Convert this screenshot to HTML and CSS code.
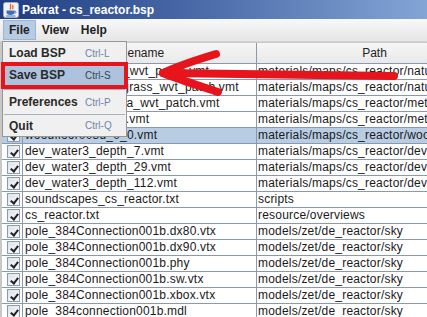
FILE: index.html
```html
<!DOCTYPE html>
<html>
<head>
<meta charset="utf-8">
<link rel="stylesheet" href="styles.css">
</head>
<body>
<div class="window">
  <div class="titlebar">
    <svg class="appicon" width="16" height="16" viewBox="0 0 16 16">
      <rect x="0.5" y="0.5" width="15" height="15" rx="2" fill="#eef2f8" stroke="#9aacc6"/>
      <path d="M8 2 C6 4 9 5 7 7.5 M10 3 C9 4.5 11 5 9.5 7" fill="none" stroke="#e06a1a" stroke-width="1.3"/>
      <path d="M3.5 8.5 H11.5 V10.5 C11.5 12 10 13 7.5 13 C5 13 3.5 12 3.5 10.5 Z" fill="#3e6fb5"/>
      <path d="M11.5 9.2 C13.5 9.2 13.5 11.2 11.3 11.4" fill="none" stroke="#3e6fb5" stroke-width="1"/>
      <path d="M3 14 H12.5" stroke="#3e6fb5" stroke-width="1"/>
    </svg>
    <span class="title">Pakrat - cs_reactor.bsp</span>
  </div>
  <div class="menubar">
    <span class="menu active">File</span>
    <span class="menu">View</span>
    <span class="menu">Help</span>
  </div>
  <div class="table">
    <div class="thead">
      <div class="th c0"></div>
      <div class="th c1">Filename</div>
      <div class="th c2">Path</div>
    </div>
    <div class="row"><div class="c0"><span class="chk"></span></div><div class="c1">blendrockgrass04_wvt_patch.vmt</div><div class="c2">materials/maps/cs_reactor/nature</div></div>
    <div class="row"><div class="c0"><span class="chk"></span></div><div class="c1">blendcobblestonegrass_wvt_patch.vmt</div><div class="c2">materials/maps/cs_reactor/nature</div></div>
    <div class="row"><div class="c0"><span class="chk"></span></div><div class="c1">blendrockconcretea_wvt_patch.vmt</div><div class="c2">materials/maps/cs_reactor/metal</div></div>
    <div class="row"><div class="c0"><span class="chk"></span></div><div class="c1">metalwall048b_ref.vmt</div><div class="c2">materials/maps/cs_reactor/metal</div></div>
    <div class="row sel"><div class="c0"><span class="chk"></span></div><div class="c1">woodfloor008d_0_0.vmt</div><div class="c2">materials/maps/cs_reactor/wood</div></div>
    <div class="row"><div class="c0"><span class="chk"></span></div><div class="c1">dev_water3_depth_7.vmt</div><div class="c2">materials/maps/cs_reactor/dev</div></div>
    <div class="row"><div class="c0"><span class="chk"></span></div><div class="c1">dev_water3_depth_29.vmt</div><div class="c2">materials/maps/cs_reactor/dev</div></div>
    <div class="row"><div class="c0"><span class="chk"></span></div><div class="c1">dev_water3_depth_112.vmt</div><div class="c2">materials/maps/cs_reactor/dev</div></div>
    <div class="row"><div class="c0"><span class="chk"></span></div><div class="c1">soundscapes_cs_reactor.txt</div><div class="c2">scripts</div></div>
    <div class="row"><div class="c0"><span class="chk"></span></div><div class="c1">cs_reactor.txt</div><div class="c2">resource/overviews</div></div>
    <div class="row"><div class="c0"><span class="chk"></span></div><div class="c1">pole_384Connection001b.dx80.vtx</div><div class="c2">models/zet/de_reactor/sky</div></div>
    <div class="row"><div class="c0"><span class="chk"></span></div><div class="c1">pole_384Connection001b.dx90.vtx</div><div class="c2">models/zet/de_reactor/sky</div></div>
    <div class="row"><div class="c0"><span class="chk"></span></div><div class="c1">pole_384Connection001b.phy</div><div class="c2">models/zet/de_reactor/sky</div></div>
    <div class="row"><div class="c0"><span class="chk"></span></div><div class="c1">pole_384Connection001b.sw.vtx</div><div class="c2">models/zet/de_reactor/sky</div></div>
    <div class="row"><div class="c0"><span class="chk"></span></div><div class="c1">pole_384Connection001b.xbox.vtx</div><div class="c2">models/zet/de_reactor/sky</div></div>
    <div class="row"><div class="c0"><span class="chk"></span></div><div class="c1">pole_384connection001b.mdl</div><div class="c2">models/zet/de_reactor/sky</div></div>
  </div>

  <div class="popup">
    <div class="item h22"><span class="lbl">Load BSP</span><span class="acc">Ctrl-L</span></div>
    <div class="item h22 hl"><span class="lbl">Save BSP</span><span class="acc">Ctrl-S</span></div>
    <div class="sep s6"></div>
    <div class="item h20"><span class="lbl">Preferences</span><span class="acc">Ctrl-P</span></div>
    <div class="sep s4"></div>
    <div class="item h19"><span class="lbl">Quit</span><span class="acc">Ctrl-Q</span></div>
  </div>
  <div class="redbox"></div>
  <svg class="arrow" width="427" height="317" viewBox="0 0 427 317">
    <g fill="none" stroke="#e8141c" stroke-width="8" stroke-linecap="round" stroke-linejoin="round">
      <path d="M216 54 C196 60 178 66 163 73 C180 80 200 86 218 92"/>
      <path d="M163 73 C240 74 320 75 394 76"/>
    </g>
  </svg>
</div>
</body>
</html>
```
FILE: styles.css
```css
* { box-sizing: border-box; }
body { margin: 0; font-family: "Liberation Sans", Arial, sans-serif; background: #fff; }
.window { position: relative; width: 427px; height: 317px; overflow: hidden; background: #fff; }

.titlebar {
  height: 19px; display: flex; align-items: center; gap: 3px; padding-left: 3px;
  background: linear-gradient(90deg, #1f3d80 0%, #4d6eab 50%, #83a5d5 100%);
  color: #fff; font-weight: bold; font-size: 12px;
}
.appicon { flex: none; }

.menubar {
  height: 23px; display: flex; align-items: stretch; padding: 1px 0 1px 3px;
  background: linear-gradient(#f8f8f8, #e6e6e6);
  border-bottom: 1px solid #d2d2d2;
}
.menu { display: flex; align-items: center; padding: 0 6px; font-size: 12px; font-weight: bold; color: #222; }
.menu.active { padding: 0 5px; background: #b7cbe3; border: 1px solid #9db4d2; }

.table { border-left: 2px solid #c8c8c8; }
.thead {
  display: grid; grid-template-columns: 21px 234px 236px; height: 22px;
  background: linear-gradient(#f6f6f6, #e9e9e9);
  border-top: 1px solid #c9c9c9; border-bottom: 1px solid #8a99ad;
}
.th { display: flex; align-items: center; justify-content: center; font-size: 12px; color: #222; border-right: 1px solid #8a99ad; }

.row {
  display: grid; grid-template-columns: 21px 234px 236px; height: 16px;
  border-bottom: 1px solid #8a99ad; font-size: 12px; color: #1a1a1a; line-height: 15px;
  letter-spacing: 0.2px;
}
.row > div { border-right: 1px solid #8a99ad; white-space: nowrap; overflow: hidden; }
.row .c1 { padding-left: 2px; }
.row .c2 { padding-left: 1px; }
.row.sel { background: #b8cde4; }
.row .c0 { padding: 1px 0 0 5px; }
.chk {
  display: block; width: 13px; height: 13px; border: 1px solid #8a9bb4;
  background: linear-gradient(135deg, #dde2ea, #fbfcfd); position: relative;
}
.chk::after {
  content: ""; position: absolute; left: 3.5px; top: 1.5px; width: 3px; height: 6px;
  border: solid #222; border-width: 0 2px 2px 0; transform: rotate(38deg);
}

.popup {
  position: absolute; left: 2px; top: 41px; width: 125px; height: 96px;
  background: #f0f0f0; border: 1px solid #979797;
}
.item { display: grid; grid-template-columns: 76px 1fr; align-items: center; padding-left: 6px; }
.h22 { height: 22px; }
.h20 { height: 20px; }
.h19 { height: 19px; }
.lbl { font-size: 12px; font-weight: bold; color: #2a2a2a; }
.acc { font-size: 10px; color: #6e84a8; }
.item.hl { background: #adc2dc; }
.item.hl .acc { color: #3a4658; }
.sep { position: relative; }
.s6 { height: 6px; }
.s4 { height: 4px; }
.sep::after { content: ""; position: absolute; left: 1px; right: 1px; top: 50%; border-top: 1px solid #a7b0bf; }

.redbox { position: absolute; left: 1px; top: 62px; width: 127px; height: 27px; border: 4px solid #e8141c; }
.arrow { position: absolute; left: 0; top: 0; pointer-events: none; }
```
